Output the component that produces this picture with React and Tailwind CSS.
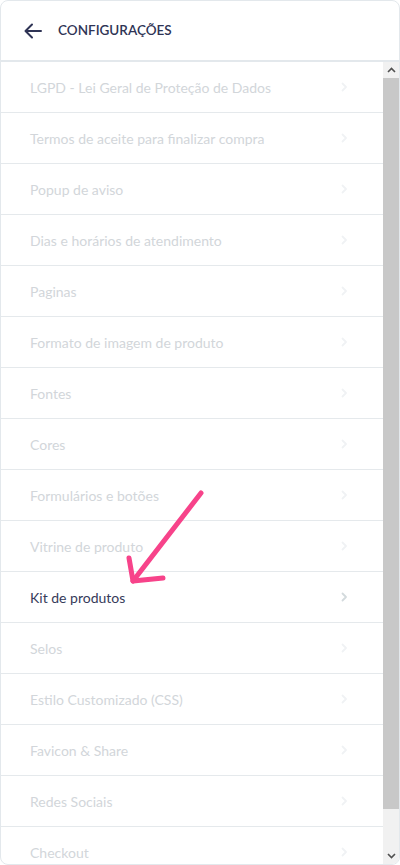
import React from 'react';

const items = [
    'LGPD - Lei Geral de Proteção de Dados',
    'Termos de aceite para finalizar compra',
    'Popup de aviso',
    'Dias e horários de atendimento',
    'Paginas',
    'Formato de imagem de produto',
    'Fontes',
    'Cores',
    'Formulários e botões',
    'Vitrine de produto',
    'Kit de produtos',
    'Selos',
    'Estilo Customizado (CSS)',
    'Favicon & Share',
    'Redes Sociais',
    'Checkout',
];

const Chevron = ({ active }) => (
    <svg width="8" height="12" viewBox="0 0 8 12" fill="none">
        <path d="M2.5 2.5l3.5 3.5-3.5 3.5" stroke={active ? '#d3dadd' : '#f0f2f4'} strokeWidth="1.8" strokeLinecap="round" strokeLinejoin="round" />
    </svg>
);

const App = () => {
    return (
        <div className="w-[400px] h-[865px] bg-white" style={{ fontFamily: 'Lato, "Liberation Sans", sans-serif' }}>
            <div className="relative w-full h-full flex flex-col border border-[#e3e8ec] rounded-lg overflow-hidden">
                {/* Header */}
                <div className="h-[61px] shrink-0 flex items-center px-[23px] border-b-2 border-[#e3e8ec]">
                    <svg width="18" height="16" viewBox="0 0 18 16" fill="none">
                        <path d="M17 8H2M8 1.5L1.5 8 8 14.5" stroke="#2f3455" strokeWidth="2" strokeLinecap="round" strokeLinejoin="round" />
                    </svg>
                    <span className="ml-[16px] text-[13.5px] font-semibold text-[#2f3455]">CONFIGURAÇÕES</span>
                </div>

                {/* List + scrollbar */}
                <div className="flex-1 flex min-h-0">
                    <div className="flex-1 overflow-hidden">
                        {items.map((item, i) => {
                            const active = item === 'Kit de produtos';
                            return (
                                <div key={i} className="h-[51px] shrink-0 flex items-center justify-between pl-[29px] pr-[35px] border-b border-[#e5e9ec]">
                                    <span className={active ? 'text-[14px] text-[#363b5a]' : 'text-[14px] text-[#d2d6da]'}>{item}</span>
                                    <Chevron active={active} />
                                </div>
                            );
                        })}
                    </div>
                    <div className="w-[16px] shrink-0 flex flex-col bg-[#f1f1f1]">
                        <div className="h-[16px] flex items-center justify-center">
                            <svg width="9" height="6" viewBox="0 0 9 6"><path d="M1 5l3.5-3.5L8 5" stroke="#505050" strokeWidth="1.6" fill="none" /></svg>
                        </div>
                        <div className="h-[731px] bg-[#c8c8c8]"></div>
                        <div className="flex-1"></div>
                        <div className="h-[16px] flex items-center justify-center">
                            <svg width="9" height="6" viewBox="0 0 9 6"><path d="M1 1l3.5 3.5L8 1" stroke="#505050" strokeWidth="1.6" fill="none" /></svg>
                        </div>
                    </div>
                </div>

                {/* Pink annotation arrow */}
                <svg className="absolute left-0 top-0 pointer-events-none" width="400" height="865" viewBox="0 0 400 865">
                    <g stroke="#f7438a" strokeWidth="5" strokeLinecap="round" strokeLinejoin="round" fill="none">
                        <path d="M200 492L132 580" />
                        <path d="M128 557L132 580L162 577" />
                    </g>
                </svg>
            </div>
        </div>
    );
};

export default App;
